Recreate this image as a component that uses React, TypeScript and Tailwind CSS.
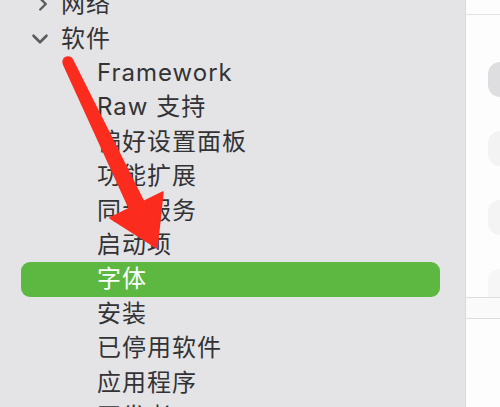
import { ChevronDown, ChevronRight } from "lucide-react";

const children = [
  "Framework",
  "Raw 支持",
  "偏好设置面板",
  "功能扩展",
  "同步服务",
  "启动项",
  "字体",
  "安装",
  "已停用软件",
  "应用程序",
  "开发者",
];

const selected = "字体";

const font = { fontFamily: "Inter, 'Noto Sans CJK SC', sans-serif" };

function Sidebar() {
  return (
    <div className="w-[465px] shrink-0 bg-[#e4e4e6] overflow-hidden text-[24px] text-[#333335] tracking-[1px]" style={font}>
      <div className="mt-[-13px] pl-[21px] pr-[25px]">
        <div className="h-[34.4px] flex items-center">
          <ChevronRight className="ml-[11px] w-[22px] h-[22px] text-[#5c5c5e]" strokeWidth={2.6} />
          <span className="ml-[7px]">网络</span>
        </div>
        <div className="h-[34.4px] flex items-center">
          <ChevronDown className="ml-[6px] w-[26px] h-[26px] text-[#5c5c5e]" strokeWidth={2.4} />
          <span className="ml-[8px]">软件</span>
        </div>
        {children.map((name) => (
          <div
            key={name}
            className={`h-[34.4px] flex items-center pl-[76px] rounded-[9px] ${
              name === selected ? "bg-[#5cb840] text-white" : ""
            }`}
          >
            {name}
          </div>
        ))}
      </div>
    </div>
  );
}

function DetailPane() {
  return (
    <div className="flex-1 bg-[#fdfdfd] border-l border-[#dadadc] overflow-hidden">
      <div className="mt-[14px] h-px bg-[#e2e2e2]" />
      <div className="ml-[22px] mt-[47px] flex flex-col gap-[34px]">
        <div className="h-[35px] w-[40px] rounded-[12px] bg-[#dedee0]" />
        <div className="h-[35px] w-[40px] rounded-[12px] bg-[#f3f3f4]" />
        <div className="h-[35px] w-[40px] rounded-[12px] bg-[#f4f4f5]" />
        <div className="h-[28px] w-[40px] rounded-t-[12px] bg-[#f6f6f7]" />
      </div>
      <div className="h-[22px] border-y border-[#dedede] bg-[#fafafa]" />
    </div>
  );
}

function Pointer() {
  return (
    <svg className="absolute left-0 top-0 pointer-events-none" width="500" height="407" viewBox="0 0 500 407">
      <path
        d="M63.5 64.2 L129.3 208.5 L110 218 L157 248 L163 192 L143.7 201.5 L72.5 59.8 A5 5 0 0 0 63.5 64.2 Z"
        fill="#fb2b1d"
        stroke="#fb2b1d"
        strokeWidth="1.5"
        strokeLinejoin="round"
      />
    </svg>
  );
}

export default function App() {
  return (
    <div className="relative w-[500px] h-[407px] flex overflow-hidden">
      <Sidebar />
      <DetailPane />
      <Pointer />
    </div>
  );
}
